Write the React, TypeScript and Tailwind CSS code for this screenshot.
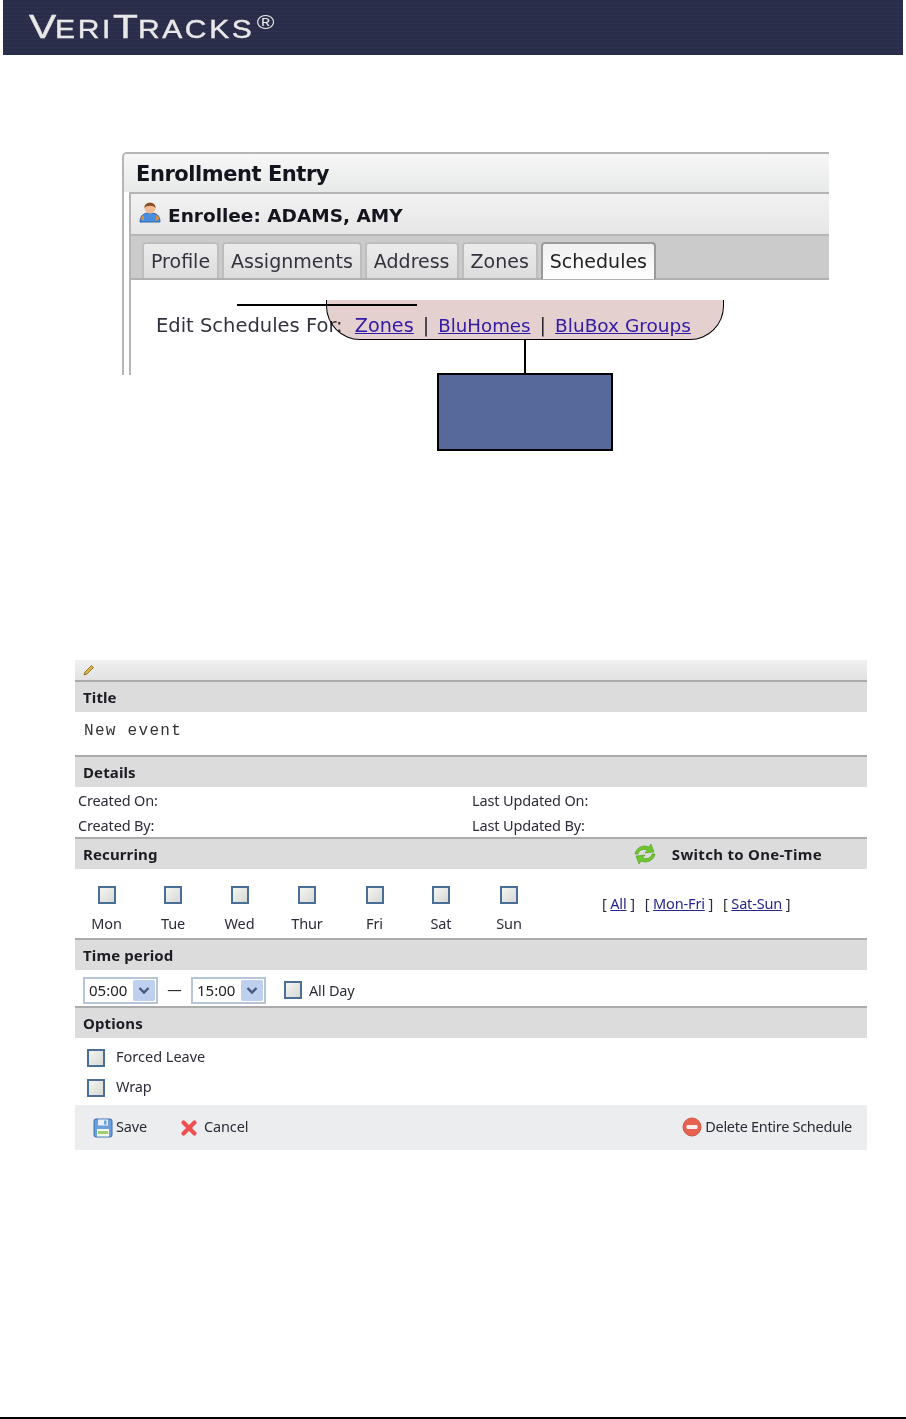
import React from "react";

const tah = "font-['Noto_Sans',sans-serif]";

function Box({ className = "" }: { className?: string }) {
  return <span className={`block w-[18px] h-[18px] border-2 border-[#4a6f96] bg-gradient-to-br from-[#f4f4f2] to-[#d8d8d4] ${className}`} />;
}

function SectionHead({ children }: { children: React.ReactNode }) {
  return (
    <div className="h-[30px] bg-[#dcdcdc] flex items-center pl-2 text-[15px] font-bold tracking-[0.12px] text-[#1c1c24]">
      {children}
    </div>
  );
}

function Rule() {
  return <div className="h-[2px] bg-[#ababab]" />;
}

function Tab({ label, active }: { label: string; active?: boolean }) {
  return (
    <div
      className={
        active
          ? "h-[37px] px-[7px] mb-[-1px] rounded-t-[4px] border-2 border-b-0 border-[#9a9a9a] bg-gradient-to-b from-[#f0f0f0] to-white flex items-center text-[19px] text-[#222]"
          : "h-[36px] px-[7px] pt-[1px] rounded-t-[4px] border-2 border-b-0 border-[#bdbdbd] bg-gradient-to-b from-[#ececec] to-[#dcdcdc] flex items-center text-[19px] text-[#33333f]"
      }
    >
      {label}
    </div>
  );
}

function Select({ value }: { value: string }) {
  return (
    <div className="w-[75px] h-[27px] border-2 border-[#b6c6d8] flex items-center justify-between pl-[4px] pr-[1px] text-[15px] tracking-[0] text-[#222]">
      <span>{value}</span>
      <span className="w-[22px] h-[21px] bg-[#bfd0ee] rounded-[2px] flex items-center justify-center">
        <svg width="12" height="9" viewBox="0 0 12 9"><path d="M1.5 2 L6 6.5 L10.5 2" fill="none" stroke="#43597f" strokeWidth="2.4" /></svg>
      </span>
    </div>
  );
}

const days = ["Mon", "Tue", "Wed", "Thur", "Fri", "Sat", "Sun"];

export default function App() {
  return (
    <div className="relative w-[906px] h-[1419px] bg-white overflow-hidden flex flex-col">
      {/* Header */}
      <div className="mx-[3px] h-[55px] bg-[#2a2d4a] bg-[repeating-linear-gradient(180deg,#2a2d4a_0px,#2a2d4a_3px,#30334f_3px,#30334f_4px)] shrink-0 pl-[26px] pt-[4px] font-['Liberation_Sans',sans-serif] text-[#e8e8e8] leading-none [-webkit-text-stroke:0.4px_#e8e8e8]">
        <div className="flex items-start origin-left scale-x-[1.2]">
          <span className="text-[34px] leading-[44px]">V</span>
          <span className="text-[25px] tracking-[2.2px] leading-[50px] ml-[-1px]">ERI</span>
          <span className="text-[34px] leading-[44px]">T</span>
          <span className="text-[25px] tracking-[2.2px] leading-[50px]">RACKS</span>
          <span className="text-[20px] leading-[36px] ml-[2px] [-webkit-text-stroke:0px_#e8e8e8]">®</span>
        </div>
      </div>

      {/* Enrollment panel */}
      <div className="relative ml-[122px] mt-[97px] w-[707px] h-[223px] shrink-0 overflow-hidden border-2 border-b-0 border-r-0 border-[#b5b5b5] rounded-tl-[5px] font-['DejaVu_Sans',sans-serif]">
        <div className="h-[38px] pl-[12px] pt-[3px] flex items-center bg-gradient-to-b from-[#f7f7f7] to-[#e8e9e9] text-[21px] font-bold tracking-[-0.45px] text-[#14141e]">
          Enrollment Entry
        </div>
        <div className="ml-[5px] border-l-2 border-[#b5b5b5] h-[calc(100%-38px)] flex flex-col">
          <div className="h-[44px] pt-[4px] border-t-2 border-b-2 border-[#b5b5b5] bg-gradient-to-b from-[#f2f2f2] to-[#e6e6e6] flex items-center pl-[8px] text-[18.5px] font-bold text-[#14141e]">
            <svg width="22" height="24" viewBox="0 0 22 24" className="mb-[9px] mr-[7px]">
              <path d="M1 22 C1 15 5 13 11 13 C17 13 21 15 21 22 Z" fill="#4a8ee0" stroke="#2f64a8" />
              <path d="M1 18 L5 15 L5 21 Z M21 18 L17 15 L17 21 Z" fill="#d98f3e" />
              <circle cx="11" cy="8" r="5.5" fill="#eebd98" />
              <path d="M5.5 8 C5 1 17 1 16.5 8 C14 5 8 5 5.5 8 Z" fill="#8a4f25" />
            </svg>
            Enrollee: ADAMS, AMY
          </div>
          <div className="h-[44px] bg-[#cbcbcb] border-b-2 border-[#b0b0b0] flex items-end pl-[11px] gap-[3px] shrink-0">
            <Tab label="Profile" />
            <Tab label="Assignments" />
            <Tab label="Address" />
            <Tab label="Zones" />
            <Tab label="Schedules" active />
          </div>
          <div className="bg-white flex-1 pl-[25px] pt-[34px] text-[19.5px] leading-[24px] text-[#33333f] whitespace-nowrap">
            Edit Schedules For:{" "}
            <span className="ml-[6px] text-[19.2px] underline text-[#3a22cc]">Zones</span>
            <span className="mx-[9px]">|</span>
            <span className="text-[18.2px] underline text-[#3a22cc]">BluHomes</span>
            <span className="mx-[9px]">|</span>
            <span className="text-[18.5px] underline text-[#3a22cc]">BluBox Groups</span>
          </div>
        </div>
      </div>

      {/* Callouts */}
      <div className="absolute left-[326px] top-[300px] w-[398px] h-[40px] rounded-b-[34px] border-[1.5px] border-t-0 border-black bg-[#e5d0d0] mix-blend-multiply" />
      <div className="absolute left-[237px] top-[304px] w-[180px] h-[2px] bg-black" />
      <div className="absolute left-[524px] top-[340px] w-[2px] h-[34px] bg-black" />
      <div className="absolute left-[437px] top-[373px] w-[176px] h-[78px] border-2 border-black bg-[#56699a]" />

      {/* Event form */}
      <div className={`ml-[75px] mt-[285px] w-[792px] shrink-0 ${tah} text-[14.5px] text-[#2c2c38] tracking-[-0.15px]`}>
        <div className="h-[20px] bg-gradient-to-b from-[#f0f0f0] to-[#e2e2e2] pl-[8px] flex items-center">
          <svg width="12" height="12" viewBox="0 0 12 12"><path d="M1 11 L2 8 L8.5 1.5 L10.5 3.5 L4 10 Z" fill="#e3b23c" stroke="#7a6420" strokeWidth="0.8" /></svg>
        </div>
        <Rule />
        <SectionHead>Title</SectionHead>
        <div className="h-[43px] pl-[9px] pb-[6px] flex items-center font-['Liberation_Mono',monospace] text-[16px] tracking-[1.3px] text-[#333]">New event</div>
        <Rule />
        <SectionHead>Details</SectionHead>
        <div className="h-[50px] grid grid-cols-[394px_1fr] pl-[3px] pt-[1px] leading-[24px]">
          <span>Created On:</span>
          <span>Last Updated On:</span>
          <span>Created By:</span>
          <span>Last Updated By:</span>
        </div>
        <Rule />
        <div className="h-[30px] bg-[#dcdcdc] flex items-center pl-2 pr-[45px] justify-between text-[15px] font-bold tracking-[0.12px] text-[#1c1c24]">
          <span>Recurring</span>
          <span className="flex items-center tracking-[0.3px]">
            <svg width="24" height="24" viewBox="0 0 24 24" className="mr-[15px]">
              <path d="M2 12 C3 6 10 2 16 5 L18 2 L21 10 L12 11 L14.5 8 C10 6.5 6 8 5 12 Z" fill="#6ec62e" stroke="#4c9a1c" strokeWidth="0.6" />
              <path d="M22 12 C21 18 14 22 8 19 L6 22 L3 14 L12 13 L9.5 16 C14 17.5 18 16 19 12 Z" fill="#6ec62e" stroke="#4c9a1c" strokeWidth="0.6" />
            </svg>
            Switch to One-Time
          </span>
        </div>
        <div className="h-[69px] flex">
          <div className="grid grid-cols-[67px_66px_67px_68px_67px_66px_70px] w-[498px] ml-[-2px] pt-[17px] justify-items-center">
            {days.map((d) => (
              <div key={d} className="flex flex-col items-center gap-[9px]">
                <Box />
                <span className="leading-[20px]">{d}</span>
              </div>
            ))}
          </div>
          <div className="ml-[31px] pt-[24px] leading-[20px] flex gap-[10px] whitespace-pre h-fit">
            <span>[ <span className="underline text-[#26268c]">All</span> ]</span>
            <span>[ <span className="underline text-[#26268c]">Mon-Fri</span> ]</span>
            <span>[ <span className="underline text-[#26268c]">Sat-Sun</span> ]</span>
          </div>
        </div>
        <Rule />
        <SectionHead>Time period</SectionHead>
        <div className="h-[36px] pt-[4px] flex items-center pl-[8px]">
          <Select value="05:00" />
          <span className="w-[33px] text-center">—</span>
          <Select value="15:00" />
          <Box className="ml-[18px]" />
          <span className="ml-[7px] mt-[1px]">All Day</span>
        </div>
        <Rule />
        <SectionHead>Options</SectionHead>
        <div className="h-[67px] pl-[12px] pt-[11px] flex flex-col gap-[12px]">
          <div className="flex items-center h-[18px]"><Box /><span className="ml-[11px] mt-[-2px] tracking-[0px]">Forced Leave</span></div>
          <div className="flex items-center h-[18px]"><Box /><span className="ml-[11px] mt-[-2px]">Wrap</span></div>
        </div>
        <div className="h-[45px] bg-[#ecedee] flex items-center justify-between pl-[18px] pr-[15px]">
          <div className="flex items-center">
            <svg width="20" height="20" viewBox="0 0 20 20" className="mr-[3px]">
              <rect x="1" y="1" width="18" height="18" rx="2" fill="#6b9fdc" stroke="#3c6fae" />
              <rect x="5" y="1.5" width="10" height="6" fill="#e8eef6" />
              <rect x="11" y="2.5" width="2.5" height="4" fill="#6b9fdc" />
              <rect x="4" y="11" width="12" height="7.5" fill="#f2f6ef" />
              <rect x="5" y="13" width="10" height="3" fill="#9cd070" />
            </svg>
            <span className="mt-[-2px]">Save</span>
            <svg width="18" height="18" viewBox="0 0 18 18" className="ml-[33px] mr-[6px]">
              <path d="M3.5 3.5 L14.5 14.5 M14.5 3.5 L3.5 14.5" stroke="#f04f4f" strokeWidth="4.2" strokeLinecap="round" />
            </svg>
            <span className="mt-[-2px]">Cancel</span>
          </div>
          <div className="flex items-center">
            <svg width="20" height="20" viewBox="0 0 20 20" className="mr-[3px] mb-[2px]">
              <circle cx="10" cy="10" r="9" fill="#e8604f" stroke="#c8553f" />
              <rect x="4.5" y="8" width="11" height="4" rx="1" fill="#fbeeee" />
            </svg>
            <span className="mt-[-2px] tracking-[-0.3px]">Delete Entire Schedule</span>
          </div>
        </div>
      </div>

      {/* Page rule */}
      <div className="absolute left-0 right-0 bottom-0 h-[2px] bg-black" />
    </div>
  );
}
